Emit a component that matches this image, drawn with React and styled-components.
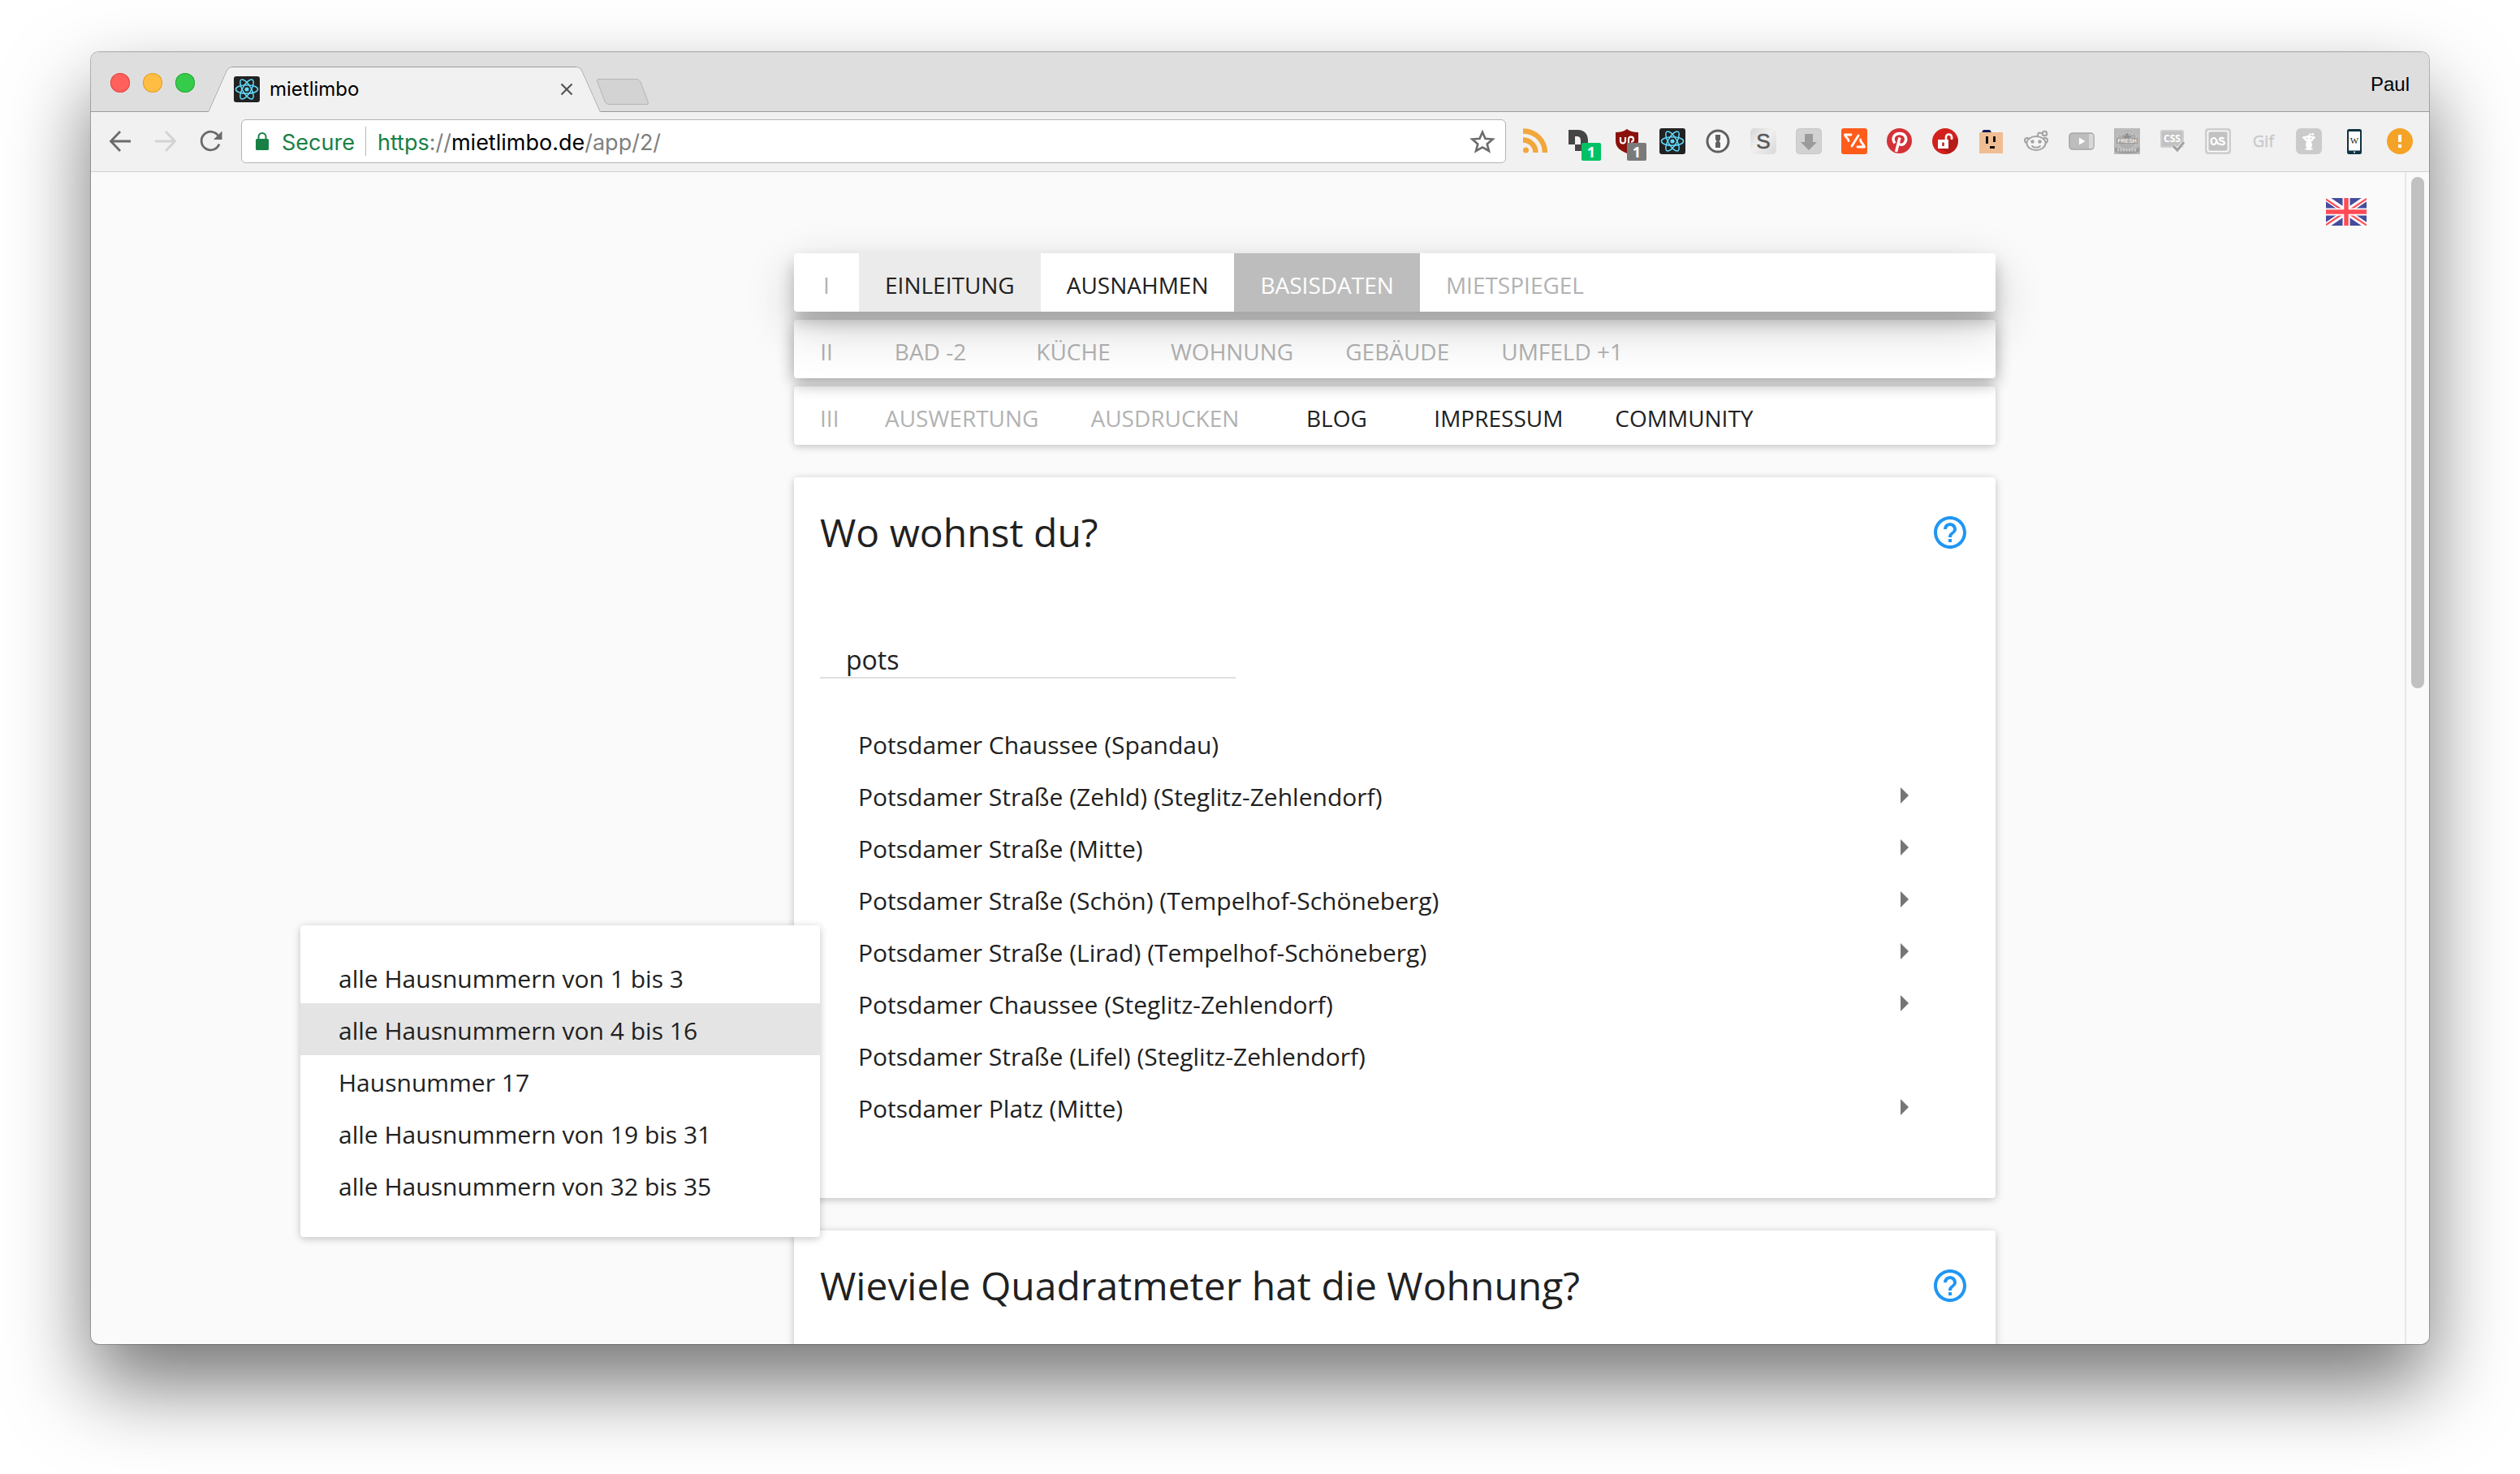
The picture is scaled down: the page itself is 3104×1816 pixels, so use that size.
import React, { useState } from "react";
import styled, { createGlobalStyle, css } from "styled-components";

const ui = `Inter, Roboto, "Liberation Sans", sans-serif`;
const body = `"Open Sans", "Noto Sans", sans-serif`;

const GlobalStyle = createGlobalStyle`
  *, *::before, *::after { box-sizing: border-box; }
  body { margin: 0; background: #fff; font-family: ${body}; color: #212121; }
  button { border: 0; padding: 0; margin: 0; background: none; font: inherit; color: inherit; cursor: pointer; }
  ul { list-style: none; margin: 0; padding: 0; }
  svg { display: block; flex: none; }
`;

/* ---------- browser window ---------- */

const Desktop = styled.div`
  height: 100vh;
  padding: 64px 112px 160px;
  display: flex;
  flex-direction: column;
  overflow: hidden;
`;

const Window = styled.div`
  flex: 1;
  min-height: 0;
  display: flex;
  flex-direction: column;
  overflow: hidden;
  border-radius: 10px;
  background: #fafafa;
  box-shadow: 0 0 0 1px rgba(0, 0, 0, 0.24), 0 50px 100px rgba(0, 0, 0, 0.54);
`;

const TitleBar = styled.header`
  flex: none;
  height: 74px;
  display: flex;
  align-items: flex-end;
  padding: 0 24px;
  background: #dedede;
  box-shadow: inset 0 -1px #9c9c9c, inset 0 1px #d0d0d0;
  font-family: ${ui};
`;

const Lights = styled.div`
  height: 74px;
  padding: 2px 16px 0 0;
  display: flex;
  align-items: center;
  gap: 16px;
`;

const Light = styled.button`
  width: 24px;
  height: 24px;
  border-radius: 50%;
  background: ${(p) => p.$fill};
  box-shadow: inset 0 0 0 1px ${(p) => p.$ring};
`;

const tabSide = css`
  content: "";
  position: absolute;
  top: 0;
  bottom: 0;
  width: 60%;
  background: #f1f1f1;
  border: 0 solid #9c9c9c;
  border-top-width: 1px;
`;

const Tab = styled.div`
  position: relative;
  width: 484px;
  height: 56px;
  display: flex;
  align-items: center;
  padding: 0 34px 0 32px;
  gap: 12px;
  font-size: 24px;
  line-height: 32px;
  color: #000;
  &::before {
    ${tabSide}
    left: 0;
    border-left-width: 1px;
    border-top-left-radius: 6px;
    transform: skewX(-24deg);
    transform-origin: bottom left;
  }
  &::after {
    ${tabSide}
    right: 0;
    border-right-width: 1px;
    border-top-right-radius: 6px;
    transform: skewX(24deg);
    transform-origin: bottom right;
  }
  > * {
    position: relative;
    z-index: 1;
  }
`;

const TabTitle = styled.span`
  flex: 1;
`;

const NewTab = styled.button`
  width: 54px;
  height: 32px;
  margin-bottom: 9px;
  border: 1px solid #b4b4b4;
  border-radius: 4px;
  background: #d3d3d3;
  transform: skewX(21deg);
`;

const Profile = styled.button`
  margin-left: auto;
  height: 72px;
  line-height: 72px;
  font-family: "Liberation Sans", sans-serif;
  font-size: 24px;
  color: #000;
  align-self: flex-start;
  padding-top: 4px;
`;

const Toolbar = styled.div`
  flex: none;
  height: 74px;
  display: flex;
  align-items: center;
  gap: 21px;
  padding: 0 20px 1px;
  background: #f1f1f1;
  border-bottom: 1px solid #d0d0d0;
  font-family: ${ui};
`;

const Tools = styled.div`
  display: flex;
  gap: 24px;
`;

const ToolButton = styled.button`
  position: relative;
  width: 32px;
  height: 32px;
`;

const Badge = styled.span`
  position: absolute;
  left: 16px;
  top: 18px;
  width: 24px;
  height: 22px;
  border-radius: 2px;
  background: ${(p) => p.$fill};
  color: #fff;
  font: 700 18px/22px ${body};
  text-align: center;
`;

const Omnibox = styled.div`
  flex: 1;
  min-width: 0;
  height: 54px;
  display: flex;
  align-items: center;
  padding: 0 12px 0 17px;
  gap: 15px;
  border: 1px solid #b4b4b4;
  border-radius: 6px;
  background: #fff;
  font-size: 27px;
  line-height: 33px;
`;

const Secure = styled.span`
  display: flex;
  align-items: center;
  gap: 16px;
  padding-right: 13px;
  box-shadow: 1px 0 #b8b8b8;
  color: #188045;
  span { padding-top: 3px; }
`;

const Url = styled.div`
  flex: 1;
  padding-top: 3px;
  white-space: nowrap;
  color: #808080;
  b { font-weight: 400; color: #000; }
  i { font-style: normal; color: #188045; }
`;

/* ---------- page ---------- */

const Viewport = styled.div`
  flex: 1;
  min-height: 0;
  display: flex;
  overflow: hidden;
`;

const Page = styled.div`
  flex: 1;
  min-width: 0;
  overflow: hidden;
`;

const TopRow = styled.div`
  display: flex;
  justify-content: flex-end;
  padding: 32px 47px 34px 0;
  button { height: 34px; }
`;

const Scrollbar = styled.div`
  flex: none;
  width: 30px;
  padding: 6px;
  border-left: 2px solid #e8e8e8;
  background: #fafafa;
`;

const Thumb = styled.div`
  width: 16px;
  height: 44%;
  border-radius: 8px;
  background: #c1c1c1;
`;

const Columns = styled.div`
  display: grid;
  grid-template-columns: minmax(0, 866fr) minmax(auto, 1480px) minmax(0, 504fr);
`;

const Main = styled.main`
  grid-column: 2;
  display: flex;
  flex-direction: column;
  gap: 40px;
`;

const Nav = styled.nav`
  display: flex;
  flex-direction: column;
  gap: 10px;
`;

const depth = {
  3: "0 20px 60px rgba(0,0,0,.19), 0 12px 20px rgba(0,0,0,.23)",
  2: "0 6px 20px rgba(0,0,0,.16), 0 6px 20px rgba(0,0,0,.23)",
  1: "0 2px 12px rgba(0,0,0,.12), 0 2px 8px rgba(0,0,0,.12)",
};

const NavRow = styled.div`
  position: relative;
  z-index: ${(p) => p.$depth};
  display: flex;
  height: 72px;
  border-radius: 4px;
  background: #fff;
  box-shadow: ${(p) => depth[p.$depth]};
  font-size: 28px;
  line-height: 66px;
`;

const Numeral = styled.span`
  width: 80px;
  padding: 6px 0 0 32px;
  color: #b2b2b2;
  span {
    display: inline-block;
    min-width: 16px;
    text-align: center;
  }
`;

const NavButton = styled.button`
  min-width: 176px;
  padding: 6px 32px 0;
  text-transform: uppercase;
  color: ${(p) => (p.disabled ? "#b2b2b2" : "#212121")};
  ${(p) => p.$visited && "background: #ebebeb;"}
  ${(p) => p.$current && "background: #bdbdbd; color: #fff;"}
`;

const Card = styled.section`
  border-radius: 4px;
  background: #fff;
  box-shadow: ${depth[1]};
  padding: 0 32px 80px;
`;

const CardHeader = styled.div`
  height: 136px;
  display: flex;
  align-items: center;
  justify-content: space-between;
`;

const Title = styled.h2`
  margin: 0;
  font-size: 48px;
  line-height: 72px;
  font-weight: 400;
`;

const HelpButton = styled.button`
  width: 48px;
  height: 48px;
`;

const Field = styled.div`
  padding: 66px 0 48px;
  display: flex;
`;

const HiddenLabel = styled.label`
  position: absolute;
  width: 1px;
  height: 1px;
  overflow: hidden;
  clip-path: inset(50%);
`;

const StreetInput = styled.input`
  width: 512px;
  height: 46px;
  padding: 0 32px;
  border: 0;
  border-bottom: 2px solid #e0e0e0;
  outline: 0;
  background: transparent;
  font: 400 32px/44px ${body};
  color: #212121;
`;

const Item = styled.li`
  position: relative;
`;

const ItemButton = styled.button`
  width: 100%;
  height: 64px;
  padding: 0 56px 0 47px;
  display: flex;
  align-items: center;
  justify-content: space-between;
  font-size: 30px;
  line-height: 44px;
  text-align: left;
  white-space: nowrap;
  background: ${(p) => (p.$active ? "#e4e4e4" : "transparent")};
  span { padding-top: 4px; }
`;

const SubMenu = styled.ul`
  position: absolute;
  z-index: 4;
  top: 0;
  right: 100%;
  width: 640px;
  && { padding: 32px 0; }
  border-radius: 4px;
  background: #fff;
  box-shadow: ${depth[1]};
`;

/* ---------- drawings ---------- */

const Svg = ({ children, s = 32, v = "0 0 32 32", ...rest }) => (
  <svg width={s} height={s} viewBox={v} fill="none" aria-hidden="true" {...rest}>
    {children}
  </svg>
);

const ReactLogo = () => (
  <Svg>
    <rect width="32" height="32" rx="3" fill="#222" />
    <g stroke="#61dafb" strokeWidth="1.5">
      <ellipse cx="16" cy="16" rx="13.6" ry="5.2" />
      <ellipse cx="16" cy="16" rx="13.6" ry="5.2" transform="rotate(60 16 16)" />
      <ellipse cx="16" cy="16" rx="13.6" ry="5.2" transform="rotate(120 16 16)" />
    </g>
    <circle cx="16" cy="16" r="2.6" fill="#61dafb" />
  </Svg>
);

const HelpIcon = () => (
  <Svg s={48} v="0 0 24 24">
    <path
      fill="#2196f3"
      d="M11 18h2v-2h-2v2zm1-16C6.48 2 2 6.48 2 12s4.48 10 10 10 10-4.48 10-10S17.52 2 12 2zm0 18c-4.41 0-8-3.59-8-8s3.59-8 8-8 8 3.59 8 8-3.59 8-8 8zm0-14c-2.21 0-4 1.79-4 4h2c0-1.1.9-2 2-2s2 .9 2 2c0 2-3 1.75-3 5h2c0-2.25 3-2.5 3-5 0-2.21-1.79-4-4-4z"
    />
  </Svg>
);

const ArrowIcon = () => (
  <Svg s={48} v="0 0 24 24">
    <path fill="#757575" d="M9.5 7l5 5-5 5z" />
  </Svg>
);

const Flag = () => (
  <svg width="50" height="34" viewBox="0 0 50 34" aria-hidden="true">
    <rect width="50" height="34" fill="#464c9b" />
    <path d="M0 0L50 34M50 0L0 34" stroke="#fff" strokeWidth="7" />
    <path d="M0 1.5L21 15.5M50 1L29 15M0 33L21 19M50 33.5L29 19.5" stroke="#ff4b55" strokeWidth="2.2" />
    <path d="M25 0V34M0 17H50" stroke="#fff" strokeWidth="9" />
    <path d="M25 0V34M0 17H50" stroke="#ff4b55" strokeWidth="5.4" />
  </svg>
);

const BackIcon = () => (
  <Svg stroke="#6b6b6b" strokeWidth="2.8">
    <path d="M29 16H5M16 4L4.5 16L16 28" />
  </Svg>
);

const ForwardIcon = () => (
  <Svg stroke="#d3d3d3" strokeWidth="2.8">
    <path d="M3 16H27M16 4L27.5 16L16 28" />
  </Svg>
);

const ReloadIcon = () => (
  <Svg>
    <path d="M26 19.5A11.3 11.3 0 1 1 25 9.5" stroke="#6b6b6b" strokeWidth="2.8" />
    <path d="M29.5 3.5V14H19z" fill="#6b6b6b" />
  </Svg>
);

const LockIcon = () => (
  <svg width="16" height="22" viewBox="0 0 16 22" aria-hidden="true">
    <rect y="8" width="16" height="14" rx="1.5" fill="#188045" />
    <path d="M3.5 9V5.5a4.5 4.5 0 0 1 9 0V9" fill="none" stroke="#188045" strokeWidth="2" />
  </svg>
);

const StarIcon = () => (
  <Svg>
    <path
      d="M16 4.8L19.500 12.800L28.600 13.500L21.700 19.400L24 28L16 23.400L8 28L10.300 19.400L3.400 13.500L12.500 12.800z"
      stroke="#6b6b6b"
      strokeWidth="2.6"
    />
  </Svg>
);

const CloseIcon = () => (
  <svg width="16" height="16" viewBox="0 0 16 16" stroke="#555" strokeWidth="2.2" aria-hidden="true">
    <path d="M1.5 1.5L14.5 14.5M14.5 1.5L1.5 14.5" />
  </svg>
);

const RssIcon = () => (
  <Svg>
    <circle cx="3.500" cy="27" r="3.500" fill="#f2a73b" />
    <path d="M0 14.500A15.500 15.500 0 0 1 15.500 30M0 3.500A26.500 26.500 0 0 1 27 30" stroke="#f2a73b" strokeWidth="6.400" />
  </Svg>
);

const DIcon = () => (
  <Svg>
    <path d="M0 2H12C19 2 24 7 24 15V28H8V20H0z" fill="#454545" />
    <path d="M8 10h2c4 0 5 2 5 6v4H8z" fill="#f1f1f1" />
  </Svg>
);

const ShieldIcon = () => (
  <Svg>
    <path d="M16 1C12 4 7 5 2 5V16C2 24 9 28 16 31C23 28 30 24 30 16V5C25 5 20 4 16 1z" fill="#8a120b" />
    <path d="M8 11V15.500a3 3 0 0 0 6 0V11M18 20V13.500a3 3 0 1 1 3 3.200" stroke="#fff" strokeWidth="2.2" />
  </Svg>
);

const OnePasswordIcon = () => (
  <Svg>
    <circle cx="16" cy="16" r="13" fill="#f7f7f7" stroke="#606060" strokeWidth="3" />
    <path d="M13 8H19V14L17.500 16L19 18V24H13V18L14.500 16L13 14z" fill="#606060" />
  </Svg>
);

const StylishIcon = () => (
  <Svg>
    <defs>
      <linearGradient id="chrome" x1="0" y1="0" x2="1" y2="1">
        <stop offset="0" stopColor="#d4d4d4" />
        <stop offset="0.45" stopColor="#f0f0f0" />
        <stop offset="1" stopColor="#d8d8d8" />
      </linearGradient>
    </defs>
    <rect width="32" height="32" rx="5" fill="url(#chrome)" />
    <text x="16" y="25" textAnchor="middle" fill="#585858" stroke="#585858" strokeWidth="0.6" fontFamily="Liberation Sans" fontSize="26">S</text>
  </Svg>
);

const DownloadIcon = () => (
  <Svg>
    <rect x="0.5" y="0.5" width="31" height="31" rx="4" fill="#d2d2d2" stroke="#c8c8c8" />
    <path d="M11 7H21V17H26L16 27L6 17H11z" fill="#9b9b9b" />
  </Svg>
);

const SlashIcon = () => (
  <Svg>
    <rect width="32" height="32" rx="3" fill="#ff5c1c" />
    <path
      d="M12 8H4.500C4.500 11 8.500 11.500 9 15.500M21 9L13 22M23.500 14C23.500 18 27.500 19 28.500 23H20"
      stroke="#fff"
      strokeWidth="2.8"
      strokeLinejoin="round"
      strokeLinecap="round"
    />
  </Svg>
);

const PinterestIcon = () => (
  <Svg>
    <circle cx="15.500" cy="15.500" r="15.500" fill="#d43237" />
    <path d="M10 18.500C5.500 12 9.500 6.500 16 6.500C22.500 6.500 25 12 23 16.500C21 21 16 21.500 14.500 18.500M16 11.500L11.500 29" stroke="#fff" strokeWidth="3.4" />
  </Svg>
);

const UnlockIcon = () => (
  <Svg>
    <circle cx="16" cy="16" r="16" fill="#d2211d" />
    <path d="M19 14L31 12A16 16 0 0 1 20 31L8 24z" fill="#b51b18" />
    <rect x="7" y="14" width="13" height="11" fill="#fff" />
    <path d="M17 15V11a3.500 3.500 0 0 1 7 0V14" stroke="#fff" strokeWidth="2.600" />
    <path d="M13.500 17.500V22" stroke="#b51b18" strokeWidth="2.400" />
  </Svg>
);

const FaceIcon = () => (
  <Svg>
    <path d="M5 5L7 2H15L17 5z" fill="#141b5c" />
    <rect x="2" y="5" width="29" height="26" fill="#f0bd92" />
    <path d="M10 10h3v9h-3zM19 10h3v7h-3zM15 22h6v3h-6z" fill="#111" />
  </Svg>
);

const RedditIcon = () => (
  <Svg stroke="#a3a3a3" strokeWidth="2">
    <path d="M17 11L19 5.500L25 6.500" />
    <circle cx="26.500" cy="6.500" r="2.800" fill="#ededed" />
    <circle cx="5" cy="15" r="3" fill="#f4f4f4" />
    <circle cx="27" cy="15" r="3" fill="#f4f4f4" />
    <ellipse cx="16" cy="18.500" rx="11.500" ry="8.500" fill="#f6f6f6" />
    <path d="M10.500 21.500C13 24.500 19 24.500 21.500 21.500" />
    <circle cx="11.500" cy="16.500" r="1.300" fill="#a3a3a3" />
    <circle cx="20.500" cy="16.500" r="1.300" fill="#a3a3a3" />
  </Svg>
);

const VideoIcon = () => (
  <Svg>
    <rect x="1" y="6" width="30" height="20" rx="4" fill="#bdbdbd" stroke="#a6a6a6" strokeWidth="1.6" />
    <path d="M25 7H28a2.500 2.500 0 0 1 2.500 2.500V22.500A2.500 2.500 0 0 1 28 25H25z" fill="#d8d8d8" />
    <path d="M13 11.500L20.500 16L13 20.500z" fill="#fff" />
  </Svg>
);

const FreshIcon = () => (
  <Svg>
    <rect width="32" height="32" fill="#b9b9b9" />
    <circle cx="16" cy="14" r="12.500" fill="#b0b0b0" stroke="#c9c9c9" />
    <path d="M8 8C12 4 20 4 24 8" stroke="#d0d0d0" strokeDasharray="2 1.500" strokeWidth="2" />
    <path d="M16 5L18 9.500H22L19 12H13L10 9.500H14z" fill="#8f8f8f" />
    <path d="M3 12H29V19H3z" fill="#9b9b9b" />
    <text x="16" y="18" textAnchor="middle" fill="#f0f0f0" fontFamily="Liberation Sans" fontWeight="700" fontSize="7">FRESH</text>
    <path d="M1 23C8 28 24 28 31 23V29C24 32 8 32 1 29z" fill="#9d9d9d" />
    <path d="M4 27H28" stroke="#cfcfcf" strokeDasharray="2 1.500" strokeWidth="3" />
  </Svg>
);

const CssIcon = () => (
  <Svg>
    <rect x="2" y="3" width="27" height="20" rx="1.5" fill="#c2c2c2" stroke="#cfcfcf" strokeWidth="2" />
    <text x="15.500" y="17" textAnchor="middle" fill="#fff" fontFamily="Open Sans" fontWeight="700" fontSize="12">CSS</text>
    <path d="M17 22L22 27L30 17" stroke="#fff" strokeWidth="5" />
    <path d="M17 22L22 27L30 17" stroke="#a2a2a2" strokeWidth="3.4" />
  </Svg>
);

const LastIcon = () => (
  <Svg>
    <rect width="32" height="32" rx="4" fill="#cfcfcf" />
    <rect x="3.500" y="3.500" width="25" height="25" rx="2" fill="#c2c2c2" stroke="#fff" strokeWidth="1.6" />
    <path
      d="M16.500 20C15 18.500 14.500 12 11 12C6.500 12 6.500 20 11 20C13 20 13.500 17.500 14.500 15M23.500 12.800C21.500 11.200 18 11.500 18 13.800C18.200 16 24 15.200 24 18C24 20.800 19 20.800 17 18.500"
      stroke="#fff"
      strokeWidth="2.2"
    />
  </Svg>
);

const GifIcon = () => (
  <Svg>
    <text x="16" y="23" textAnchor="middle" fill="#c9c9c9" stroke="#c9c9c9" strokeWidth="0.4" fontFamily="Open Sans" fontSize="20">Gif</text>
  </Svg>
);

const AlienIcon = () => (
  <Svg>
    <rect width="32" height="32" rx="6" fill="#cbcbcb" />
    <path d="M16 10L17 7L20 7.500" stroke="#fff" strokeWidth="1.2" />
    <g fill="#fff">
      <circle cx="20.800" cy="7.500" r="1.400" />
      <circle cx="10" cy="11.500" r="1.800" />
      <circle cx="22" cy="11.500" r="1.800" />
      <ellipse cx="16" cy="12.800" rx="6" ry="4" />
      <ellipse cx="16" cy="20.500" rx="4" ry="4.500" />
      <ellipse cx="16" cy="25.600" rx="5" ry="1.400" />
    </g>
    <circle cx="13.500" cy="12.500" r="1" fill="#cbcbcb" />
    <circle cx="18.500" cy="12.500" r="1" fill="#cbcbcb" />
  </Svg>
);

const PhoneIcon = () => (
  <Svg>
    <rect x="7" y="1" width="18" height="31" rx="2.5" fill="#0d3443" />
    <rect x="9" y="4" width="14" height="23.500" fill="#fff" />
    <circle cx="16" cy="29.600" r="1" fill="#fff" />
    <text x="16" y="18.500" textAnchor="middle" fill="#222" fontFamily="Liberation Serif" fontSize="11">W</text>
  </Svg>
);

const AlertIcon = () => (
  <Svg>
    <circle cx="16" cy="16" r="16" fill="#f5a326" />
    <path d="M14 8h4v9h-4zM14 20h4v4h-4z" fill="#fff" />
  </Svg>
);

const extensions = [
  ["RSS", RssIcon],
  ["Disconnect", DIcon, "#00c264"],
  ["uBlock", ShieldIcon, "#7a7a7a"],
  ["React", ReactLogo],
  ["1Password", OnePasswordIcon],
  ["Stylish", StylishIcon],
  ["Downloads", DownloadIcon],
  ["Switcher", SlashIcon],
  ["Pinterest", PinterestIcon],
  ["Unlock", UnlockIcon],
  ["Face", FaceIcon],
  ["Reddit", RedditIcon],
  ["Video", VideoIcon],
  ["Fresh", FreshIcon],
  ["CSS", CssIcon],
  ["Last.fm", LastIcon],
  ["GIF", GifIcon],
  ["Reddit Companion", AlienIcon],
  ["Mobile view", PhoneIcon],
  ["Update", AlertIcon],
];

/* ---------- content ---------- */

const navRows = [
  {
    numeral: "I",
    depth: 3,
    items: [
      { label: "Einleitung", visited: true },
      { label: "Ausnahmen" },
      { label: "Basisdaten", current: true },
      { label: "Mietspiegel", disabled: true },
    ],
  },
  {
    numeral: "II",
    depth: 2,
    items: ["Bad -2", "Küche", "Wohnung", "Gebäude", "Umfeld +1"].map((label) => ({ label, disabled: true })),
  },
  {
    numeral: "III",
    depth: 1,
    items: [
      { label: "Auswertung", disabled: true },
      { label: "Ausdrucken", disabled: true },
      { label: "Blog" },
      { label: "Impressum" },
      { label: "Community" },
    ],
  },
];

const houseNumbers = [
  "alle Hausnummern von 1 bis 3",
  "alle Hausnummern von 4 bis 16",
  "Hausnummer 17",
  "alle Hausnummern von 19 bis 31",
  "alle Hausnummern von 32 bis 35",
];

const streets = [
  { name: "Potsdamer Chaussee (Spandau)" },
  { name: "Potsdamer Straße (Zehld) (Steglitz-Zehlendorf)", more: true },
  { name: "Potsdamer Straße (Mitte)", more: true },
  { name: "Potsdamer Straße (Schön) (Tempelhof-Schöneberg)", more: true },
  { name: "Potsdamer Straße (Lirad) (Tempelhof-Schöneberg)", more: true, ranges: houseNumbers },
  { name: "Potsdamer Chaussee (Steglitz-Zehlendorf)", more: true },
  { name: "Potsdamer Straße (Lifel) (Steglitz-Zehlendorf)" },
  { name: "Potsdamer Platz (Mitte)", more: true },
];

const BrowserChrome = () => (
  <>
    <TitleBar>
      <Lights>
        <Light $fill="#ff605c" $ring="#e2463f" aria-label="Close window" />
        <Light $fill="#ffbd44" $ring="#dfa023" aria-label="Minimize window" />
        <Light $fill="#35cc4b" $ring="#27a637" aria-label="Zoom window" />
      </Lights>
      <Tab>
        <ReactLogo />
        <TabTitle>mietlimbo</TabTitle>
        <button aria-label="Close tab">
          <CloseIcon />
        </button>
      </Tab>
      <NewTab aria-label="New tab" />
      <Profile>Paul</Profile>
    </TitleBar>
    <Toolbar>
      <Tools>
        <ToolButton aria-label="Back"><BackIcon /></ToolButton>
        <ToolButton aria-label="Forward" disabled><ForwardIcon /></ToolButton>
        <ToolButton aria-label="Reload"><ReloadIcon /></ToolButton>
      </Tools>
      <Omnibox>
        <Secure>
          <LockIcon />
          <span>Secure</span>
        </Secure>
        <Url role="textbox" aria-label="Address">
          <i>https</i>://<b>mietlimbo.de</b>/app/2/
        </Url>
        <ToolButton aria-label="Bookmark"><StarIcon /></ToolButton>
      </Omnibox>
      <Tools>
        {extensions.map(([name, Icon, badge]) => (
          <ToolButton key={name} aria-label={name}>
            <Icon />
            {badge && <Badge $fill={badge}>1</Badge>}
          </ToolButton>
        ))}
      </Tools>
    </Toolbar>
  </>
);

const Question = ({ title, children }) => (
  <Card>
    <CardHeader>
      <Title>{title}</Title>
      <HelpButton aria-label="Hilfe">
        <HelpIcon />
      </HelpButton>
    </CardHeader>
    {children}
  </Card>
);

export default function App() {
  const [street, setStreet] = useState("pots");
  return (
    <Desktop>
      <GlobalStyle />
      <Window>
        <BrowserChrome />
        <Viewport>
          <Page>
            <TopRow>
              <button aria-label="English">
                <Flag />
              </button>
            </TopRow>
            <Columns>
              <Main>
                <Nav>
                  {navRows.map((row) => (
                    <NavRow key={row.numeral} $depth={row.depth}>
                      <Numeral><span>{row.numeral}</span></Numeral>
                      {row.items.map((item) => (
                        <NavButton
                          key={item.label}
                          disabled={item.disabled}
                          $visited={item.visited}
                          $current={item.current}
                        >
                          {item.label}
                        </NavButton>
                      ))}
                    </NavRow>
                  ))}
                </Nav>
                <Question title="Wo wohnst du?">
                  <Field>
                    <HiddenLabel htmlFor="street" aria-label="Straße" />
                    <StreetInput id="street" value={street} onChange={(e) => setStreet(e.target.value)} />
                  </Field>
                  <ul>
                    {streets.map((s) => (
                      <Item key={s.name}>
                        <ItemButton>
                          <span>{s.name}</span>
                          {s.more && <ArrowIcon />}
                        </ItemButton>
                        {s.ranges && (
                          <SubMenu>
                            {s.ranges.map((r, i) => (
                              <li key={r}>
                                <ItemButton $active={i === 1}><span>{r}</span></ItemButton>
                              </li>
                            ))}
                          </SubMenu>
                        )}
                      </Item>
                    ))}
                  </ul>
                </Question>
                <Question title="Wieviele Quadratmeter hat die Wohnung?" />
              </Main>
            </Columns>
          </Page>
          <Scrollbar>
            <Thumb />
          </Scrollbar>
        </Viewport>
      </Window>
    </Desktop>
  );
}
